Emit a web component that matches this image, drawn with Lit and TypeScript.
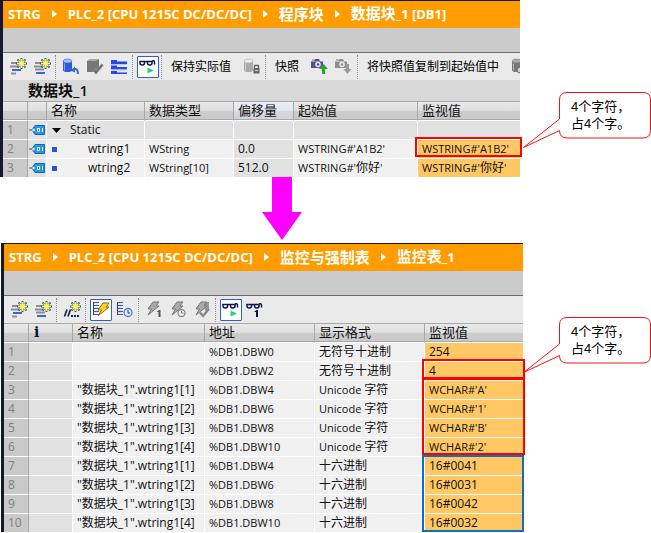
import { LitElement, html, svg, css, nothing, TemplateResult, SVGTemplateResult } from "lit";
import { customElement, property } from "lit/decorators.js";

type Mark = { color: "red" | "blue"; span: number };
type Row = { cells: string[]; kind?: "group" | "item"; mark?: Mark };

/* Latin runs are set one size smaller than the Chinese characters beside them. */
const mix = (text: string) =>
  text
    .split(/([\u3000-\u9fff]+)/)
    .filter((t) => t)
    .map((t) => (/[\u3000-\u9fff]/.test(t) ? t : html`<span class="latin">${t}</span>`));

const star = svg`
  <path d="M15.500 3v11M10 8.500h11M11.500 4.500l8 8M19.500 4.500l-8 8" stroke="#2f5f78" stroke-width="1.800"/>
  <path d="M15.500 4v9M11 8.500h9M12.500 5.500l6 6M18.500 5.500l-6 6" stroke="#fff04a" stroke-width="1.100"/>
  <circle cx="15.500" cy="8.500" r="2.500" fill="#fff45c"/>`;

const lens = svg`
  <g fill="none" stroke="#10104e" stroke-width="1.500">
    <path d="M4 6.500h4.500v1.500q0 2-2.200 2T4 8zM11.500 6.500H16v1.500q0 2-2.200 2T11.500 8zM8.500 6.500h3M16 6q2.500-1 2.500 1.500v2"/>
  </g>`;

const bolt = (fill: string, edge: string) =>
  svg`<path d="M11 4h6l-3 4h3L6 17l3.500-6H6z" fill=${fill} stroke=${edge}/>`;

const list = svg`
  <path d="M4.500 4v13" stroke="#2c3a78"/>
  <path d="M5 4.500h5M5 7.500h5M5 10.500h5M5 13.500h5M5 16.500h5" stroke="#4a5c98"/>
  <path d="M5 6h4M5 9h4M5 12h4M5 15h4" stroke="#c5d0ee"/>`;

const camera = (body: string) => svg`
  <path d="M3 6h3l1-2h4l1 2h3v7H3z" fill=${body}/>
  <path d="M3 6.500h12" stroke="#fff" stroke-opacity=".4"/>
  <circle cx="10" cy="9.500" r="2.800" fill="#e6e9f2"/><circle cx="10" cy="9.500" r="1.300" fill=${body}/>
  <path d="M4 5h2" stroke="#777"/>`;

const drum = (body: string, top: string) => svg`
  <path d="M4 6v9q0 2 4.500 2t4.500-2V6z" fill=${body}/>
  <ellipse cx="8.500" cy="6" rx="4.500" ry="2" fill=${top} stroke=${body} stroke-width=".6"/>
  <path d="M5.500 8.500v7" stroke="#fff" stroke-opacity=".45"/>`;

const icons: Record<string, SVGTemplateResult> = {
  insert: svg`
    <path d="M5 8h6M4 11.500h9M5 18.500h5" stroke="#8b8f93" stroke-width="2"/>
    <path d="M6 15h9" stroke="#3c63e0" stroke-width="2"/>${star}`,
  append: svg`
    <path d="M5 8h6M4 11.500h9M5 14.500h9" stroke="#8b8f93" stroke-width="2"/>
    <path d="M6 18h9" stroke="#3c63e0" stroke-width="2"/>${star}`,
  comment: svg`
    <path d="M4.500 18.500l2.500-7M8 18.500l2.500-7" stroke="#17205e" stroke-width="1.700"/>
    <path d="M11 18h2M14 18h2M17 18h2" stroke="#17205e" stroke-width="2"/>${star}`,
  reset: svg`${drum("#3158e0", "#a9c0ff")}
    <path d="M14 15q5-3 5 4" fill="none" stroke="#3f63cc" stroke-width="2"/>
    <path d="M11.500 15.500l4.500-4v6z" fill="#3f63cc"/>`,
  check: svg`
    <path d="M4 6l3-2h9v11l-3 2H4z" fill="#777"/><path d="M4 6l3-2h9l-3 2z" fill="#aaa"/>
    <path d="M10 14l3 3.500 6.500-8" fill="none" stroke="#999" stroke-width="2.800"/>
    <path d="M10 14l3 3.500 6.500-8" fill="none" stroke="#666" stroke-width="1.300"/>`,
  expand: svg`
    <path d="M4 5h6v1.500h10V9H4zM4 10.500h6V12h10v2.500H4zM4 16h6v1.500h10V19H4z" fill="#2747e2"/>
    <path d="M4 9.500h16M4 15h16" stroke="#b8c6ff"/>`,
  monitor: svg`${lens}<path d="M11.500 12.500l6.500 3-6.500 3z" fill="#27d36b"/>`,
  monitorOnce: svg`${lens}<path d="M11 14l2.500-2h1.500v7h-2v-5z" fill="#10104e"/>`,
  lock: svg`${drum("#aaa", "#eee")}
    <rect x="13.500" y="13" width="6" height="5.500" fill="#666"/>
    <path d="M14.500 13v-2.500h4V13" fill="none" stroke="#666" stroke-width="1.300"/>
    <path d="M15 15.500h3" stroke="#ddd"/>`,
  snapUp: svg`${camera("#4a5688")}<path d="M15.500 9l4.500 5h-3v5h-3v-5h-3z" fill="#2ba32b"/>`,
  snapDown: svg`${camera("#8f8f8f")}<path d="M15.500 19l4-5h-2.500V9h-3v5h-2.500z" fill="#999"/>`,
  gear: svg`${drum("#777", "#aaa")}<circle cx="12" cy="15" r="3" fill="#ccc" stroke="#666"/>`,
  listBolt: svg`${list}<g transform="translate(3 1)">${bolt("#ffd21f", "#94690c")}</g>`,
  listClock: svg`${list}<circle cx="15" cy="14.500" r="4" fill="#dfe9ff" stroke="#5577c8" stroke-width="1.300"/>
    <path d="M15 12v3h2" fill="none" stroke="#27408c"/>`,
  boltOnce: svg`${bolt("#aaa", "#777")}<path d="M14.500 14l2.500-2h1.500v7h-2v-5z" fill="#555"/>`,
  boltClock: svg`${bolt("#aaa", "#777")}<circle cx="15.500" cy="15" r="3.500" fill="#eee" stroke="#888" stroke-width="1.300"/>
    <path d="M15.500 13v2h2" fill="none" stroke="#777"/>`,
  boltCheck: svg`<path d="M13 4h6v9h-4z" fill="#999"/>${bolt("#aaa", "#777")}
    <path d="M10 14.500l3 3.500 6-7" fill="none" stroke="#888" stroke-width="2.200"/>`,
};

const tag = html`<svg class="tag" viewBox="0 0 16 10" aria-hidden="true">
  <path d="M0 5h5" stroke="#3a4a66" />
  <path d="M3 5l3-4.500h9.500v9H6z" fill="#1e9be6" stroke="#1266ae" />
  <circle cx="4.500" cy="5" r="1.200" fill="#fff" />
  <path d="M8.500 3.500h2v3h-2zM13.500 3v4" fill="none" stroke="#fff" />
</svg>`;

@customElement("tool-bar")
class ToolBar extends LitElement {
  @property({ attribute: false }) items: string[] = [];

  static styles = css`
    :host {
      display: flex;
      height: 25px;
      padding: 2px 0 0 3px;
      overflow: hidden;
      background: #eaeaea;
    }
    .tool {
      flex: none;
      box-sizing: border-box;
      height: 24px;
      padding: 0;
      border: 0;
      background: none;
      color: #000;
      font: 12px/24px "Open Sans", "Noto Sans CJK SC", sans-serif;
      white-space: nowrap;
    }
    .icon {
      width: 24px;
    }
    .on {
      width: 22px;
      height: 22px;
      margin: 1px;
      border: 1px solid #2c5fd0;
      border-radius: 1px;
      background: #fff;
    }
    .on .glyph {
      margin: -2px;
    }
    .text {
      padding: 0 9px 0 6px;
    }
    .glyph {
      display: block;
      width: 24px;
      height: 24px;
    }
    .sep {
      flex: none;
      height: 24px;
      margin: 0 3px 0 1px;
      border-left: 1px dotted #8a8a8a;
    }
  `;

  render() {
    return this.items.map((item) => {
      if (item === "|") return html`<span class="sep"></span>`;
      const on = item.endsWith("*");
      const name = item.replace("*", "");
      return icons[name]
        ? html`<button class="tool icon ${on ? "on" : ""}" aria-label=${name}>
            <svg class="glyph" viewBox="0 0 24 24" fill="none">${icons[name]}</svg>
          </button>`
        : html`<button class="tool text">${name}</button>`;
    });
  }
}

@customElement("crumb-bar")
class CrumbBar extends LitElement {
  @property({ attribute: false }) path: string[] = [];

  static styles = css`
    :host {
      display: block;
      background: #ff9c00;
    }
    .path {
      display: flex;
      align-items: center;
      gap: 11px;
      height: 27px;
      padding: 0 5px 2px;
      box-sizing: border-box;
      overflow: hidden;
      font: 700 15px/24px "Open Sans", "Noto Sans CJK SC", sans-serif;
      white-space: nowrap;
    }
    .link {
      color: #fff;
      text-decoration: none;
    }
    .link .latin {
      font-size: 13px;
    }
    .arrow {
      flex: none;
      width: 5px;
      height: 8px;
      fill: #fff;
    }
    .strip {
      height: 24px;
      border-bottom: 1px solid #6e6e6e;
      background: #cbcbcb;
    }
  `;

  render() {
    return html`<nav class="path">
        ${this.path.map(
          (p, i) => html`${i
              ? html`<svg class="arrow" viewBox="0 0 5 8" aria-hidden="true"><path d="M0 0l5 4-5 4z" /></svg>`
              : nothing}<a class="link" href="#">${mix(p)}</a>`
        )}
      </nav>
      <div class="strip"></div>`;
  }
}

@customElement("call-out")
class CallOut extends LitElement {
  static styles = css`
    :host {
      position: relative;
      display: block;
      box-sizing: border-box;
      width: 128px;
      height: 57px;
      padding: 6px 0 0 48px;
      font: 13px/17px "Liberation Sans", "Noto Sans CJK SC", sans-serif;
      color: #000;
    }
    .shape {
      position: absolute;
      inset: 0;
      width: 128px;
      height: 57px;
      fill: #fff;
      stroke: #f01414;
    }
    .note {
      position: relative;
      margin: 0;
    }
    .line {
      display: block;
    }
  `;

  render() {
    return html`<svg class="shape" viewBox="0 0 128 57" aria-hidden="true">
        <path
          d="M44 .5h76q7.500 0 7.500 7.500v30.500q0 7.500-7.500 7.500H44q-7.500 0-7.500-7.500L.5 55.500l36-28.500V8q0-7.500 7.500-7.500z"
        />
      </svg>
      <p class="note"><span class="line">4个字符，</span><span class="line">占4个字。</span></p>`;
  }
}

@customElement("app-root")
class AppRoot extends LitElement {
  static styles = css`
    :host {
      display: block;
      background: #fff;
      color: #101010;
      font: 12px/18px "Open Sans", "Noto Sans CJK SC", sans-serif;
    }
    .scene {
      display: flex;
      align-items: flex-start;
    }
    .panel {
      flex: 1;
      min-width: 0;
      border-top: 1px solid #15182a;
      border-left: 3px solid #15182a;
      background: #fff;
    }
    .watch {
      margin-left: 1px;
    }
    .side {
      flex: none;
      width: 128px;
    }
    .block-side {
      padding: 92px 0 0 3px;
    }
    .watch-side {
      padding-top: 74px;
    }
    .title {
      margin: 0;
      padding-left: 25px;
      background: #d8d8d8;
      font-size: 15px;
      font-weight: 600;
      line-height: 21px;
    }
    .title .latin {
      font-size: 15px;
    }
    .grid {
      width: 100%;
      table-layout: fixed;
      border-collapse: separate;
      border-spacing: 0;
    }
    .w-num {
      width: 25px;
    }
    .w-tag {
      width: 19px;
    }
    .w-info {
      width: 44px;
    }
    .w-offset {
      width: 60px;
    }
    .w-type {
      width: 89px;
    }
    .w-name {
      width: 98px;
    }
    .w-mid {
      width: 110px;
    }
    .w-start {
      width: 124px;
    }
    .w-long {
      width: 132px;
    }
    .head,
    .cell {
      box-sizing: border-box;
      padding: 0 0 0 4px;
      text-align: left;
      font-weight: 400;
      white-space: nowrap;
    }
    .head {
      height: 20px;
      border-top: 1px solid #a8a8a8;
      border-right: 1px solid #a8a8a8;
      border-bottom: 1px solid #fff;
      background: linear-gradient(#e9e9e9, #dedede 50%, #cccccc 51%, #c9c9c9);
      box-shadow: inset 0 -1px #a8a8a8;
      vertical-align: top;
      font-size: 13px;
      line-height: 16px;
    }
    .hot {
      background: linear-gradient(#e9eef6, #e2e7ef 50%, #d5dae2 51%, #cfd4dc);
    }
    .info {
      padding-left: 5px;
      color: #10104e;
      font: 700 14px/16px "DejaVu Serif", serif;
    }
    .head:last-child,
    .cell:last-child {
      border-right: 0;
    }
    .cell {
      position: relative;
      height: 19px;
      border-right: 1px solid #fff;
      border-bottom: 1px solid #fff;
      background: #f0f0f0;
      line-height: 18px;
    }
    .row:last-child .cell {
      height: 18px;
      border-bottom: 0;
    }
    .num {
      border-right-color: #a8a8a8;
      background: #c9c9c9;
      color: #808080;
    }
    .dim {
      background: #e1e1e1;
    }
    .value {
      background: #ffc864;
    }
    .latin {
      font-size: 11px;
    }
    .plain,
    .plain .latin {
      font-size: 12px;
    }
    .tag-cell {
      padding-left: 1px;
    }
    .tag {
      display: block;
      width: 16px;
      height: 10px;
    }
    .entry {
      display: flex;
      align-items: center;
      padding-left: 1px;
    }
    .square {
      width: 5px;
      height: 5px;
      margin-right: 31px;
      background: #2f55cc;
    }
    .caret {
      width: 9px;
      height: 5px;
      margin-right: 9px;
    }
    .mark {
      position: absolute;
      z-index: 1;
      top: -3px;
      left: -3px;
      right: -2px;
      box-sizing: border-box;
      border: 2px solid #f00;
    }
    .blue {
      top: -2px;
      right: -1px;
      border-color: #0b70c0;
    }
    .down {
      display: block;
      width: 40px;
      height: 63px;
      margin: 0 0 3px 262px;
      fill: #f0f;
    }
  `;

  private mark(m?: Mark) {
    return m
      ? html`<span class="mark ${m.color}" style="height:${m.span * 19 + 1}px"></span>`
      : nothing;
  }

  private blockRow(row: Row, i: number): TemplateResult {
    const group = row.kind === "group";
    const dim = group ? "dim" : "";
    const [name, type, offset, start, value] = row.cells;
    return html`<tr class="row">
      <td class="cell num plain">${i + 1}</td>
      <td class="cell tag-cell dim">${tag}</td>
      <td class="cell plain ${dim}">
        <div class="entry">
          ${group
            ? html`<svg class="caret" viewBox="0 0 9 5" aria-hidden="true"><path d="M0 0h9L4.500 5z" /></svg>`
            : html`<span class="square"></span>`}${name}
        </div>
      </td>
      <td class="cell ${dim}">${mix(type)}</td>
      <td class="cell plain dim">${offset}</td>
      <td class="cell ${dim}">${mix(start)}</td>
      <td class="cell ${group ? "dim" : "value"}">${mix(value)}${this.mark(row.mark)}</td>
    </tr>`;
  }

  private watchRow(row: Row, i: number): TemplateResult {
    const [name, address, format, value] = row.cells;
    return html`<tr class="row">
      <td class="cell num plain">${i + 1}</td>
      <td class="cell dim"></td>
      <td class="cell plain">${name}</td>
      <td class="cell">${mix(address)}</td>
      <td class="cell">${mix(format)}</td>
      <td class="cell value ${value.startsWith("W") ? "" : "plain"}">${mix(value)}${this.mark(row.mark)}</td>
    </tr>`;
  }

  render() {
    const blockRows: Row[] = [
      { kind: "group", cells: ["Static", "", "", "", ""] },
      { cells: ["wtring1", "WString", "0.0", "WSTRING#'A1B2'", "WSTRING#'A1B2'"], mark: { color: "red", span: 1 } },
      { cells: ["wtring2", "WString[10]", "512.0", "WSTRING#'你好'", "WSTRING#'你好'"] },
    ];
    const item = (n: number) => `"数据块_1".wtring1[${n}]`;
    const chars = ["A", "1", "B", "2"];
    const codes = ["0041", "0031", "0042", "0032"];
    const watchRows: Row[] = [
      { cells: ["", "%DB1.DBW0", "无符号十进制", "254"] },
      { cells: ["", "%DB1.DBW2", "无符号十进制", "4"], mark: { color: "red", span: 1 } },
      ...chars.map((c, i) => ({
        cells: [item(i + 1), `%DB1.DBW${4 + 2 * i}`, "Unicode 字符", `WCHAR#'${c}'`],
        mark: i ? undefined : ({ color: "red", span: 4 } as Mark),
      })),
      ...codes.map((c, i) => ({
        cells: [item(i + 1), `%DB1.DBW${4 + 2 * i}`, "十六进制", `16#${c}`],
        mark: i ? undefined : ({ color: "blue", span: 4 } as Mark),
      })),
    ];

    return html`
      <section class="scene">
        <div class="panel">
          <crumb-bar .path=${["STRG", "PLC_2 [CPU 1215C DC/DC/DC]", "程序块", "数据块_1 [DB1]"]}></crumb-bar>
          <tool-bar
            .items=${["insert", "append", "|", "reset", "check", "expand", "|", "monitor*", "|", "保持实际值", "lock",
              "|", "快照", "snapUp", "snapDown", "|", "将快照值复制到起始值中", "gear"]}
          ></tool-bar>
          <h2 class="title">${mix("数据块_1")}</h2>
          <table class="grid">
            <colgroup>
              <col class="w-num" /><col class="w-tag" /><col class="w-name" /><col class="w-type" />
              <col class="w-offset" /><col class="w-start" /><col />
            </colgroup>
            <thead>
              <tr>
                <th class="head"></th>
                <th class="head"></th>
                <th class="head">名称</th>
                <th class="head">数据类型</th>
                <th class="head hot">偏移量</th>
                <th class="head">起始值</th>
                <th class="head">监视值</th>
              </tr>
            </thead>
            <tbody>${blockRows.map((r, i) => this.blockRow(r, i))}</tbody>
          </table>
        </div>
        <aside class="side block-side"><call-out></call-out></aside>
      </section>
      <svg class="down" viewBox="0 0 40 63" aria-hidden="true"><path d="M10 0h20v35h10L20 63 0 35h10z" /></svg>
      <section class="scene">
        <div class="panel watch">
          <crumb-bar .path=${["STRG", "PLC_2 [CPU 1215C DC/DC/DC]", "监控与强制表", "监控表_1"]}></crumb-bar>
          <tool-bar
            .items=${["insert", "append", "|", "comment", "|", "listBolt*", "listClock", "|", "boltOnce", "boltClock",
              "boltCheck", "|", "monitor*", "monitorOnce"]}
          ></tool-bar>
          <table class="grid">
            <colgroup>
              <col class="w-num" /><col class="w-info" /><col class="w-long" /><col class="w-mid" />
              <col class="w-mid" /><col />
            </colgroup>
            <thead>
              <tr>
                <th class="head"></th>
                <th class="head info">i</th>
                <th class="head">名称</th>
                <th class="head">地址</th>
                <th class="head">显示格式</th>
                <th class="head">监视值</th>
              </tr>
            </thead>
            <tbody>${watchRows.map((r, i) => this.watchRow(r, i))}</tbody>
          </table>
        </div>
        <aside class="side watch-side"><call-out></call-out></aside>
      </section>
    `;
  }
}
